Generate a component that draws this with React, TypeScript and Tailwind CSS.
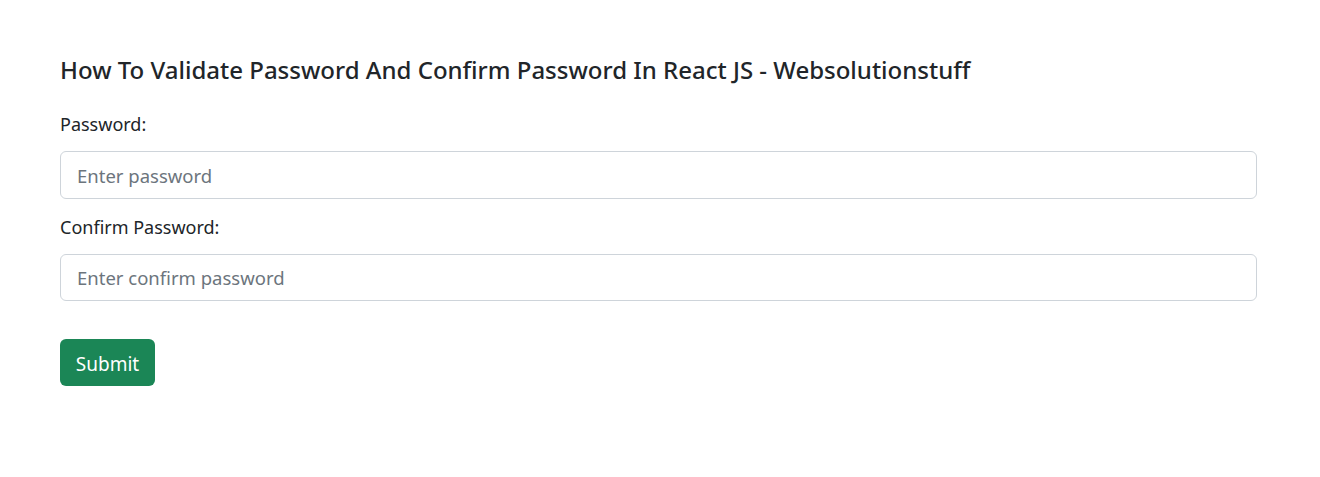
const App = () => {
    return (
        <div className="min-h-screen bg-white text-[#212529] font-['Noto_Sans',sans-serif]">
            <div className="pt-[55px] pl-[60px] w-[1257px]">
                {/* Title */}
                <h4 className="text-[24px] font-medium leading-[29px] mb-[27px]">
                    How To Validate Password And Confirm Password In React JS - Websolutionstuff
                </h4>

                <form onSubmit={(e) => e.preventDefault()}>
                    <label className="block text-[18px] leading-[27px] mb-[13px]">Password:</label>
                    <input
                        type="password"
                        placeholder="Enter password"
                        className="block w-full h-[48px] px-[16px] text-[18.5px] border border-[#ced4da] rounded-[6px] outline-none placeholder:text-[#6c757d]"
                    />

                    <label className="block text-[18px] leading-[27px] mt-[15px] mb-[13px]">Confirm Password:</label>
                    <input
                        type="password"
                        placeholder="Enter confirm password"
                        className="block w-full h-[47px] px-[16px] text-[18.5px] border border-[#ced4da] rounded-[6px] outline-none placeholder:text-[#6c757d]"
                    />

                    <button
                        type="submit"
                        className="mt-[38px] h-[47px] w-[95px] pt-[3px] rounded-[6px] bg-[#1b8656] text-white text-[19px]"
                    >
                        Submit
                    </button>
                </form>
            </div>
        </div>
    );
};

export default App;
